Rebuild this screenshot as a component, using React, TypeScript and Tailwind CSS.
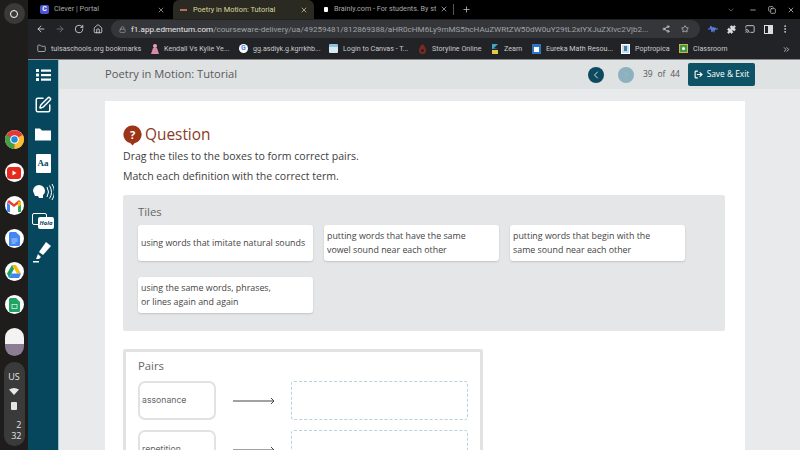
import { ArrowLeft, ArrowRight, RotateCw, Home, Lock, Share2, Star, Puzzle, Cast, MoreVertical, X, Plus, ChevronDown, Minus, Copy, Folder, ChevronLeft, ChevronRight, ChevronsRight, SquarePen, LogOut } from "lucide-react";

const Dock = ({ c }: { c: React.ReactNode }) => (
  <div className="w-[19px] h-[19px] rounded-full bg-white flex items-center justify-center overflow-hidden">{c}</div>
);

const Tile = ({ children }: { children: React.ReactNode }) => (
  <div className="w-[175px] h-[36px] bg-white rounded-[3px] shadow-[0_1px_2px_rgba(0,0,0,0.15)] px-[3px] flex items-center text-[8.85px] leading-[14.5px] text-[#444]">
    <div>{children}</div>
  </div>
);

const Pair = ({ label }: { label: string }) => (
  <div className="flex items-center h-[39px] mb-[10px] shrink-0">
    <div className="w-[78px] h-[39px] border-2 border-[#e2e2e2] rounded-[7px] flex items-center pl-[2px] text-[8.7px] text-[#666] font-['Inter',sans-serif]">{label}</div>
    <div className="w-[42px] ml-[17px] flex items-center">
      <svg width="42" height="8" viewBox="0 0 42 8"><path d="M0 4H41M38 1l3 3-3 3" stroke="#444" strokeWidth="1" fill="none" /></svg>
    </div>
    <div className="ml-[16px] w-[177px] h-[39px] border-[1.5px] border-dashed border-[#b5d3da] rounded-[3px]"></div>
  </div>
);

const Bm = ({ icon, label, w }: { icon: React.ReactNode; label: string; w: string }) => (
  <div className={`flex items-center gap-[5px] ${w} shrink-0`}>
    <span className="w-[9px] h-[10px] flex items-center justify-center shrink-0">{icon}</span>
    <span className="text-[#c9cacc] text-[7.15px] whitespace-nowrap">{label}</span>
  </div>
);

const NavItem = ({ children }: { children: React.ReactNode }) => (
  <div className="h-[29.4px] w-full flex items-center justify-center shrink-0">{children}</div>
);

export default function App() {
  return (
    <div className="w-[800px] h-[450px] overflow-hidden flex bg-[#1f1d1c] font-['Open_Sans',sans-serif]">
      {/* Shelf */}
      <div className="w-[28px] shrink-0 bg-[#1f1d1c] flex flex-col items-center">
        <div className="mt-[3px] w-[21px] h-[21px] rounded-full bg-[#3a3a3a] flex items-center justify-center">
          <div className="w-[8px] h-[8px] rounded-full border-[1.5px] border-white"></div>
        </div>
        <div className="mt-[106px] flex flex-col gap-[14px]">
          <Dock c={<svg width="19" height="19" viewBox="0 0 20 20"><circle cx="10" cy="10" r="10" fill="#e53935"/><path d="M10 10L1.3 5A10 10 0 0 0 10 20z" fill="#43a047"/><path d="M10 10V20A10 10 0 0 0 18.7 5z" fill="#fbc02d"/><circle cx="10" cy="10" r="4.6" fill="#fff"/><circle cx="10" cy="10" r="3.4" fill="#1e88e5"/></svg>} />
          <Dock c={<svg width="14" height="12" viewBox="0 0 14 12"><rect width="14" height="12" rx="3" fill="#e62b1e"/><path d="M5.5 3.5v5l4-2.500z" fill="#fff"/></svg>} />
          <Dock c={<svg width="14" height="12" viewBox="0 0 14 12"><path d="M0 2v10h3V5z" fill="#4285f4"/><path d="M14 2v10h-3V5z" fill="#34a853"/><path d="M0 2l7 5 7-5-2-2-5 4-5-4z" fill="#ea4335"/><path d="M11 1.500L14 2v3l-3 2z" fill="#fbbc04"/></svg>} />
          <Dock c={<svg width="11" height="14" viewBox="0 0 11 14"><path d="M0 1.500A1.500 1.500 0 0 1 1.500 0H7l4 4v8.500a1.500 1.500 0 0 1-1.500 1.500h-8A1.500 1.500 0 0 1 0 12.500z" fill="#4285f4"/><path d="M2.500 7h6M2.500 9h6M2.500 11h4" stroke="#cfe0fb" strokeWidth=".8"/></svg>} />
          <Dock c={<svg width="14" height="13" viewBox="0 0 14 13"><path d="M5 0h4l5 8.500h-4z" fill="#fbbc04"/><path d="M5 0l2 4-5 9-2-4.500z" fill="#1ea362"/><path d="M4.500 8.500H14L12 13H2z" fill="#4285f4"/></svg>} />
          <Dock c={<svg width="11" height="14" viewBox="0 0 11 14"><path d="M0 1.500A1.500 1.500 0 0 1 1.500 0H7l4 4v8.500a1.500 1.500 0 0 1-1.500 1.500h-8A1.500 1.500 0 0 1 0 12.500z" fill="#1fa463"/><rect x="3" y="6.500" width="5" height="4" fill="none" stroke="#d5f0e1" strokeWidth=".8"/></svg>} />
        </div>
        <div className="mt-[14px] w-[19px] h-[28px] rounded-[10px] overflow-hidden flex flex-col">
          <div className="h-[16px] bg-[#f3f3f3]"></div>
          <div className="flex-1 bg-[#8d7d94]"></div>
        </div>
        <div className="mt-[6px] w-[21px] h-[84px] rounded-[10px] bg-[#3a3a3a] flex flex-col items-center text-[#e4e4e4] text-[9px] leading-[11px] pt-[9px]">
          <span>US</span>
          <svg width="10" height="7" viewBox="0 0 10 7" className="mt-[6px]"><path d="M0 1.500Q5-1.500 10 1.500L5 7z" fill="#e8e8e8"/></svg>
          <div className="mt-[7px] w-[6px] h-[8px] bg-[#e4e4e4] rounded-[1px]"></div>
          <div className="mt-[9px] w-[15px] text-right leading-[11px]">2</div>
          <div className="w-[15px] text-right leading-[11px]">32</div>
        </div>
      </div>

      <div className="flex-1 flex flex-col min-w-0">
        {/* Tabs */}
        <div className="h-[19px] bg-[#000] flex items-center shrink-0 font-['Roboto',sans-serif]">
          <div className="w-[145px] flex items-center pl-[12px] pr-[4px] shrink-0">
            <span className="w-[9px] h-[9px] rounded-[2px] bg-[#4a55d4] text-white text-[7px] leading-[9px] text-center font-bold">C</span>
            <span className="ml-[5px] text-[7.3px] text-[#a9a9a9] flex-1">Clever | Portal</span>
            <X size={8} className="text-[#bbb] mr-[4px]" />
          </div>
          <div className="w-[141px] h-[19px] rounded-t-[6px] bg-[#2a2a22] flex items-center pl-[7px] pr-[6px] shrink-0">
            <span className="w-[7px] h-[2px] bg-[#b5705f]"></span>
            <span className="ml-[6px] text-[7.4px] text-[#dcd79e] flex-1">Poetry in Motion: Tutorial</span>
            <X size={8} className="text-[#e4dfa6]" />
          </div>
          <div className="w-[136px] flex items-center pl-[10px] pr-[2px] shrink-0">
            <span className="w-[4px] h-[5px] rounded-[1px] bg-white"></span>
            <span className="ml-[6px] text-[7.2px] text-[#a9a9a9] flex-1 whitespace-nowrap">Brainly.com - For students. By st</span>
            <X size={8} className="text-[#ccc] ml-[1px] shrink-0" />
          </div>
          <div className="w-px h-[11px] bg-[#555] ml-[3px]"></div>
          <Plus size={9} className="text-[#ccc] ml-[8px]" />
          <div className="ml-auto flex items-center text-[#ddd] pr-[5px] gap-[11px]">
            <ChevronDown size={8} className="text-[#888] mr-[3px]" />
            <Minus size={8} />
            <Copy size={8} />
            <X size={8} />
          </div>
        </div>
        {/* Toolbar */}
        <div className="h-[20px] bg-[#212226] flex items-center shrink-0 text-[#ddd] font-['Roboto',sans-serif]">
          <ArrowLeft size={10} className="ml-[8px]" />
          <ArrowRight size={10} className="ml-[9px] text-[#777]" />
          <RotateCw size={10} className="ml-[9px]" />
          <Home size={10} className="ml-[9px]" />
          <div className="ml-[8px] flex-none w-[589px] h-[18px] rounded-full bg-[#35363a] flex items-center pl-[8px] pr-[6px]">
            <Lock size={7} className="text-[#aaa] shrink-0" />
            <span className="ml-[5px] w-[527px] text-[8.1px] whitespace-nowrap text-[#a0a2a5]">
              <span className="text-[#e8e8e8]">f1.app.edmentum.com</span>/courseware-delivery/ua/49259481/812869388/aHR0cHM6Ly9mMS5hcHAuZWRtZW50dW0uY29tL2xlYXJuZXIvc2Vjb2...
            </span>
            <Share2 size={8} className="ml-[4px] shrink-0" />
            <Star size={8} className="ml-[11px] shrink-0" />
          </div>
          <svg className="ml-[8px]" width="10" height="8" viewBox="0 0 10 8"><path d="M0 4h2l1-3 1 6 1-5 1 4 1-3 1 1h2" stroke="#5c7fe8" strokeWidth="1.200" fill="none"/></svg>
          <Puzzle size={9} className="ml-[9px]" fill="#ddd" />
          <Cast size={10} className="ml-[9px]" />
          <div className="ml-[9px] w-[9px] h-[9px] border border-[#ddd] flex justify-end"><div className="w-[4px] bg-[#ddd]"></div></div>
          <MoreVertical size={10} className="ml-[7px]" />
        </div>
        {/* Bookmarks */}
        <div className="h-[21px] bg-[#222326] flex items-center shrink-0 border-b border-[#8a8a8a] pl-[9px] relative font-['Roboto',sans-serif]">
          <Bm w="w-[113px]" icon={<Folder size={9} className="text-[#c9cacc]" />} label="tulsaschools.org bookmarks" />
          <Bm w="w-[89px]" icon={<svg width="8" height="10" viewBox="0 0 8 10"><circle cx="4" cy="2" r="2" fill="#e8a0bc"/><path d="M2 4h4l2 6H0z" fill="#d88ba6"/></svg>} label="Kendall Vs Kylie Ye..." />
          <Bm w="w-[90px]" icon={<span className="w-[9px] h-[9px] rounded-full bg-white text-[#4285f4] text-[7px] leading-[9px] text-center font-bold">G</span>} label="gg.asdiyk.g.kgrrkhb..." />
          <Bm w="w-[89px]" icon={<span className="w-[9px] h-[9px] rounded-[1px] bg-[#d7e9f4] border-t-[3px] border-[#8fc3df]"></span>} label="Login to Canvas - T..." />
          <Bm w="w-[72px]" icon={<svg width="7" height="10" viewBox="0 0 7 10"><path d="M3.500 0Q7 3 7 6.500a3.500 3.500 0 0 1-7 0Q0 3 3.500 0z" fill="#7a2b20"/><circle cx="3.500" cy="6.500" r="1.500" fill="#222326"/></svg>} label="Storyline Online" />
          <Bm w="w-[42px]" icon={<svg width="8" height="10" viewBox="0 0 8 10"><path d="M1 0h6L3 4h4L1 5z" fill="#3aa9c9"/><path d="M1 6h6v4H1z" fill="#e6c84a"/></svg>} label="Zearn" />
          <Bm w="w-[89px]" icon={<span className="w-[9px] h-[10px] bg-[#2e75c4] border-[2px] border-t-[3px] border-[#2e75c4] flex"><span className="flex-1 bg-white"></span></span>} label="Eureka Math Resou..." />
          <Bm w="w-[58px]" icon={<span className="w-[9px] h-[10px] bg-[#c9dcec] border border-white flex items-center justify-center"><span className="w-[3px] h-[5px] bg-[#3c7fb0]"></span></span>} label="Poptropica" />
          <Bm w="w-[60px]" icon={<span className="w-[10px] h-[9px] bg-[#3c9a4e] border-[1.5px] border-[#d4b13e] flex items-center justify-center"><span className="w-[3px] h-[3px] rounded-full bg-white"></span></span>} label="Classroom" />
          <ChevronsRight size={9} className="text-[#ddd] absolute right-[9px] top-[6px]" />
        </div>
        {/* Page */}
        <div className="flex-1 flex min-h-0">
          <div className="w-[31px] shrink-0 bg-[#06475d] border-r border-[#9fc5cc] flex flex-col items-center text-white overflow-hidden pt-[0.5px]">
            <NavItem>
              <svg width="15" height="12" viewBox="0 0 15 12" fill="#fff"><rect width="3" height="3" rx=".5"/><rect y="4.500" width="3" height="3" rx=".5"/><rect y="9" width="3" height="3" rx=".5"/><rect x="5" y=".5" width="10" height="2.200"/><rect x="5" y="5" width="10" height="2.200"/><rect x="5" y="9.500" width="10" height="2.200"/></svg>
            </NavItem>
            <NavItem><SquarePen size={18} strokeWidth={2} /></NavItem>
            <NavItem><svg width="18" height="16" viewBox="0 0 18 16"><path d="M1 2.500h5l2 2h9v10H1z" fill="#fff"/></svg></NavItem>
            <NavItem>
              <div className="w-[15px] h-[19px] bg-white rounded-[1px] text-[#06475d] text-[9px] font-bold flex items-center justify-center font-['Liberation_Serif',serif]">Aa</div>
            </NavItem>
            <NavItem><svg width="22" height="17" viewBox="0 0 22 17"><path d="M1 7a6 6 0 0 1 12 0c0 2-1 3-2 4v3H7l-1-2H3z" fill="#fff"/><path d="M15 3q3 5 0 10M17.500 1.500q4 7 0 13M20 0q5 8 0 16" stroke="#fff" fill="none"/></svg></NavItem>
            <NavItem>
              <div className="w-[22px] h-[18px] relative">
                <div className="absolute left-0 top-0 w-[15px] h-[12px] border border-white rounded-[2px]"></div>
                <div className="absolute right-0 top-[4px] w-[16px] h-[12px] bg-white rounded-[2px] text-[#06475d] text-[6px] italic font-bold leading-[12px] text-center">Hola</div>
              </div>
            </NavItem>
            <NavItem><svg width="20" height="22" viewBox="0 0 20 22"><path d="M13 1l5 4-8 9-4-3z" fill="#fff"/><path d="M5 13l3 3-2 2H3zM0 20h6v1.500H0z" fill="#fff"/></svg></NavItem>
          </div>
          <div className="flex-1 flex flex-col bg-[#e8eaeb] min-w-0">
            <div className="h-[29px] shrink-0 bg-[#dfe2e3] flex items-center pl-[46px] pr-[45px]">
              <span className="text-[11.15px] text-[#58595b]">Poetry in Motion: Tutorial</span>
              <div className="ml-auto flex items-center">
                <div className="w-[16px] h-[16px] rounded-full bg-[#0e4a5f] flex items-center justify-center"><ChevronLeft size={12} className="text-[#cfe0e6]" /></div>
                <div className="ml-[14px] w-[16px] h-[16px] rounded-full bg-[#8eb1bf] flex items-center justify-center"><ChevronRight size={12} className="text-[#9ab9c6]" /></div>
                <span className="ml-[9px] w-[37px] flex justify-between text-[8.5px] text-[#555]"><span>39</span><span>of</span><span>44</span></span>
                <div className="ml-[8px] w-[67px] h-[23px] rounded-[2px] bg-[#0e5266] flex items-center justify-center gap-[4px] text-white text-[8.4px]">
                  <LogOut size={9} strokeWidth={3} />
                  <span>Save &amp; Exit</span>
                </div>
              </div>
            </div>
            <div className="flex-1 min-h-0 pt-[12px] pl-[46px] pr-[55px] overflow-hidden">
              <div className="w-[640px] h-[360px] bg-white pl-[18px] pt-[24px] pr-[20px] overflow-hidden">
                <div className="flex items-center h-[20px]">
                  <svg width="19" height="21" viewBox="0 0 19 21"><path d="M9.500 0.500a9 9 0 0 1 2 17.800L9.500 20.500 7.500 18.300a9 9 0 0 1 2-17.800z" fill="#9c3517"/><text x="9.500" y="14" fontSize="11" fontWeight="700" fill="#fff" textAnchor="middle" fontFamily="Open Sans">?</text></svg>
                  <span className="ml-[3px] text-[15.4px] text-[#8a3a1e]">Question</span>
                </div>
                <div className="mt-[1px] text-[10.55px] leading-[20px] text-[#3d3d3d]">Drag the tiles to the boxes to form correct pairs.</div>
                <div className="text-[10.55px] leading-[20px] text-[#3d3d3d]">Match each definition with the correct term.</div>
                <div className="mt-[9px] w-[602px] h-[136px] bg-[#e4e6e7] rounded-[2px] pl-[15px] pt-[9px]">
                  <div className="text-[11.3px] leading-[16px] text-[#666]">Tiles</div>
                  <div className="mt-[5px] flex gap-[11px]">
                    <Tile>using words that imitate natural sounds</Tile>
                    <Tile>putting words that have the same<br />vowel sound near each other</Tile>
                    <Tile>putting words that begin with the<br />same sound near each other</Tile>
                  </div>
                  <div className="mt-[16px]">
                    <Tile>using the same words, phrases,<br />or lines again and again</Tile>
                  </div>
                </div>
                <div className="mt-[18px] w-[360px] h-[120px] border-[3px] border-[#e2e2e2] rounded-[2px] pl-[12px] pt-[6px] flex flex-col">
                  <div className="text-[11.3px] leading-[16px] text-[#666] mb-[7px]">Pairs</div>
                  <Pair label="assonance" />
                  <Pair label="repetition" />
                </div>
              </div>
            </div>
          </div>
        </div>
      </div>
    </div>
  );
}
